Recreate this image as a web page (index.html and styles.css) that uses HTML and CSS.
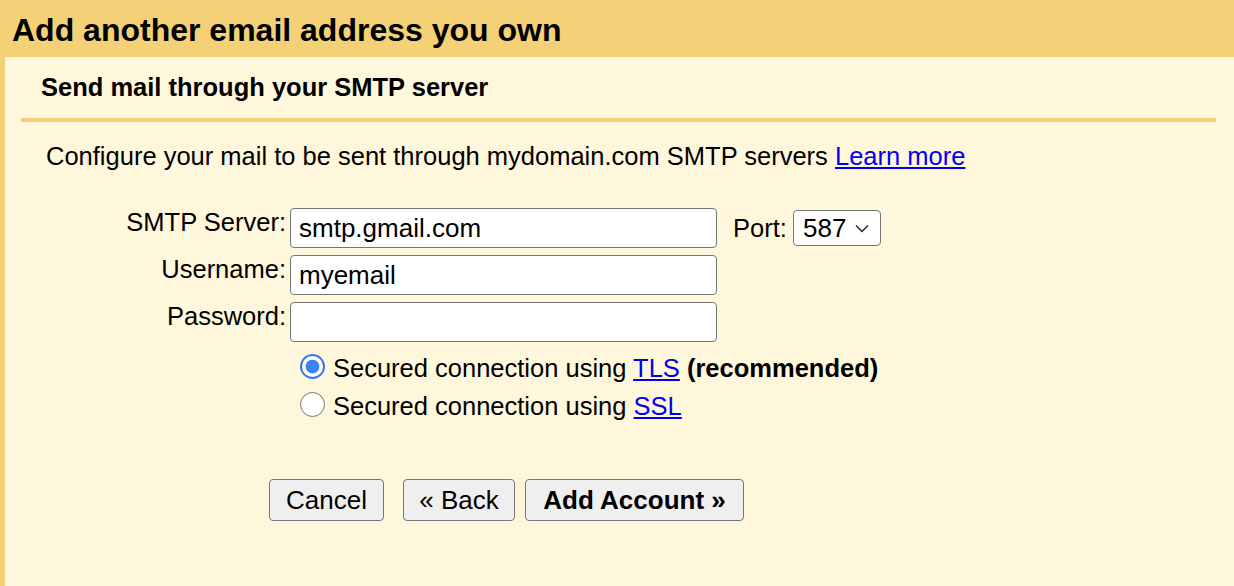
FILE: index.html
```html
<!DOCTYPE html>
<html>
<head>
<meta charset="utf-8">
<link rel="stylesheet" href="styles.css">
</head>
<body>
<div class="header"><h1 class="title">Add another email address you own</h1></div>
<div class="content">
  <div class="inner">
    <h2 class="subtitle">Send mail through your SMTP server</h2>
    <div class="rule"></div>
    <p class="intro">Configure your mail to be sent through mydomain.com SMTP servers <a href="#" class="link">Learn more</a></p>
    <div class="form">
      <div class="row">
        <label class="label">SMTP Server:</label>
        <input class="field" type="text" value="smtp.gmail.com">
        <span class="port-label">Port:</span>
        <div class="select"><span>587</span>
          <svg class="chev" width="14" height="9" viewBox="0 0 14 9"><path d="M1 1.5 L7 7.5 L13 1.5" fill="none" stroke="#222" stroke-width="1.4"/></svg>
        </div>
      </div>
      <div class="row">
        <label class="label">Username:</label>
        <input class="field" type="text" value="myemail">
      </div>
      <div class="row">
        <label class="label">Password:</label>
        <input class="field" type="password" value="">
      </div>
      <div class="radios">
        <div class="radio-row"><span class="radio checked"></span><span>Secured connection using <a href="#" class="link">TLS</a> <b>(recommended)</b></span></div>
        <div class="radio-row"><span class="radio"></span><span>Secured connection using <a href="#" class="link">SSL</a></span></div>
      </div>
    </div>
    <div class="buttons">
      <button class="btn cancel">Cancel</button>
      <button class="btn back">« Back</button>
      <button class="btn primary">Add Account »</button>
    </div>
  </div>
</div>
</body>
</html>
```
FILE: styles.css
```css
* { box-sizing: border-box; }
html, body { margin: 0; padding: 0; }
body {
  background: #fff7dc;
  font-family: "Liberation Sans", Arial, sans-serif;
  color: #000;
  width: 1234px;
  height: 586px;
  overflow: hidden;
}
.header {
  background: #f4d177;
  height: 57px;
  padding: 0 0 0 12px;
}
.title {
  margin: 0;
  font-size: 32px;
  font-weight: bold;
  padding-top: 3px;
  line-height: 54px;
}
.content {
  border-left: 5px solid #f4d177;
  height: 529px;
}
.inner {
  padding: 0 18px 0 16px;
}
.subtitle {
  margin: 0;
  font-size: 25.5px;
  font-weight: bold;
  padding: 16px 0 0 20px;
  line-height: 29px;
  height: 61px;
}
.rule {
  height: 4px;
  background: #f4d177;
}
.intro {
  margin: 0;
  font-size: 25.5px;
  padding: 20px 0 0 25px;
  line-height: 29px;
}
.link { color: #0000ee; text-decoration: underline; }
.form {
  margin-top: 37px;
}
.row {
  display: flex;
  align-items: flex-start;
  height: 47px;
}
.label {
  width: 265px;
  text-align: right;
  font-size: 25.5px;
  line-height: 29px;
  margin-right: 4px;
}
.field {
  width: 427px;
  height: 40px;
  border: 1px solid #767676;
  border-radius: 4px;
  background: #fff;
  font-family: "Liberation Sans", Arial, sans-serif;
  font-size: 26px;
  padding: 0 8px;
  color: #000;
  margin: 0;
}
.port-label {
  font-size: 25.5px;
  width: 76px;
  padding-left: 16px;
  line-height: 40px;
}
.select {
  width: 88px;
  height: 36px;
  margin-top: 2px;
  border: 1px solid #767676;
  border-radius: 4px;
  background: #fff;
  font-size: 26px;
  display: flex;
  align-items: center;
  padding: 0 0 0 9px;
  gap: 9px;
}
.chev { display: block; }
.radios {
  padding-left: 279px;
  margin-top: 0px;
}
.radio-row {
  display: flex;
  align-items: center;
  font-size: 25.5px;
  height: 38px;
}
.radio {
  width: 25px;
  height: 25px;
  border-radius: 50%;
  border: 1.5px solid #767676;
  background: #fff;
  margin-right: 8px;
  margin-top: -4px;
  flex: none;
}
.radio.checked {
  border: 2.5px solid #3478f6;
  background: radial-gradient(circle, #3b82f6 0 6.5px, #fff 7.2px);
}
.buttons {
  padding-left: 248px;
  margin-top: 54px;
  display: flex;
}
.btn {
  height: 42px;
  font-family: "Liberation Sans", Arial, sans-serif;
  font-size: 26px;
  background: #efefef;
  border: 1px solid #767676;
  border-radius: 4px;
  color: #000;
  padding: 0;
  margin: 0;
}
.btn.cancel { width: 115px; }
.btn.back { margin-left: 19px; width: 112px; }
.btn.primary { margin-left: 10px; font-weight: bold; width: 219px; }
```
